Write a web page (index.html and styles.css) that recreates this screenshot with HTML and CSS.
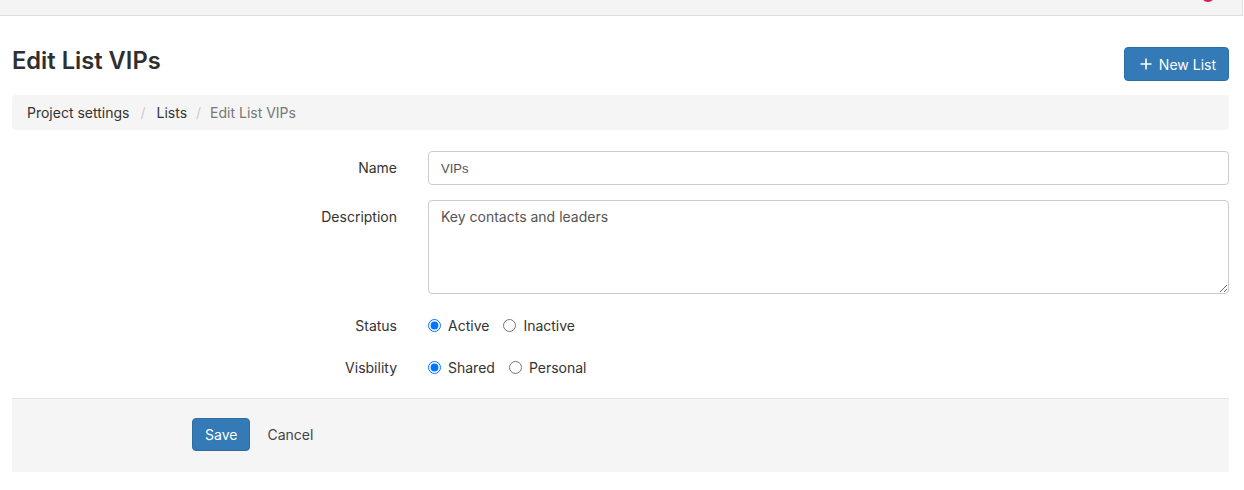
FILE: index.html
```html
<!DOCTYPE html>
<html>
<head>
<meta charset="utf-8">
<link rel="stylesheet" href="styles.css">
</head>
<body>
<div class="topbar"><span class="badge"></span></div>
<div class="page">
  <div class="page-head">
    <h1 class="title">Edit List VIPs</h1>
    <button class="btn btn-primary btn-new"><svg class="plus" width="12" height="12" viewBox="0 0 12 12"><path d="M6 0.5V11.5M0.5 6H11.5" stroke="#fff" stroke-width="1.6" fill="none"/></svg><span>New List</span></button>
  </div>
  <nav class="crumbs">
    <a class="crumb">Project settings</a><span class="sep">/</span>
    <a class="crumb">Lists</a><span class="sep sep-last">/</span>
    <span class="crumb active">Edit List VIPs</span>
  </nav>
  <form class="form">
    <div class="row">
      <label class="lbl">Name</label>
      <input class="input" type="text" value="VIPs">
    </div>
    <div class="row">
      <label class="lbl">Description</label>
      <textarea class="textarea">Key contacts and leaders</textarea>
    </div>
    <div class="row radio-row first">
      <span class="lbl">Status</span>
      <div class="radios">
        <label class="opt"><input type="radio" name="status" checked><span>Active</span></label>
        <label class="opt"><input type="radio" name="status"><span>Inactive</span></label>
      </div>
    </div>
    <div class="row radio-row">
      <span class="lbl">Visbility</span>
      <div class="radios">
        <label class="opt"><input type="radio" name="vis" checked><span>Shared</span></label>
        <label class="opt"><input type="radio" name="vis"><span>Personal</span></label>
      </div>
    </div>
    <div class="footer">
      <button type="button" class="btn btn-primary btn-save">Save</button>
      <a class="cancel">Cancel</a>
    </div>
  </form>
</div>
</body>
</html>
```
FILE: styles.css
```css
* { box-sizing: border-box; }
html, body { margin: 0; padding: 0; background: #fff; }
body {
  font-family: Inter, "Noto Sans", sans-serif;
  font-size: 14px;
  color: #333;
}
.topbar {
  position: relative;
  height: 16px;
  background: #f4f4f4;
  border-bottom: 1px solid #dedede;
  border-right: 1px solid #e2e2e2;
  margin-right: 1px;
  overflow: hidden;
}
.badge {
  position: absolute;
  left: 1201px;
  top: -12px;
  width: 14px;
  height: 14px;
  border-radius: 50%;
  background: #d81b4f;
}
.page { padding: 0 15px 0 12px; }
.page-head {
  display: flex;
  justify-content: space-between;
  align-items: flex-start;
  margin-top: 30px;
}
.title {
  margin: 2px 0 0;
  font-size: 23.7px;
  line-height: 26px;
  font-weight: 600;
  color: #2f2f2f;
}
.btn {
  font-family: Inter, sans-serif;
  font-size: 14px;
  border-radius: 4px;
  border: 1px solid #2e6da4;
  cursor: pointer;
}
.btn-primary { background: #337ab7; color: #fff; }
.btn-new {
  margin-top: 1px;
  height: 34px;
  display: flex;
  align-items: center;
  gap: 7px;
  padding: 0 12px 0 15px;
}
.plus { display: block; }
.crumbs {
  margin-top: 14px;
  height: 35px;
  background: #f5f5f5;
  border-radius: 4px;
  padding: 0 15px;
  display: flex;
  align-items: center;
}
.crumb { color: #333; }
.crumb.active { color: #777; }
.sep { color: #ccc; margin: 0 11px; }
.sep-last { margin: 0 9px; }
.form { margin-top: 21px; }
.row {
  display: grid;
  grid-template-columns: 385px 1fr;
  column-gap: 31px;
  margin-bottom: 15px;
  align-items: start;
}
.lbl {
  text-align: right;
  line-height: 20px;
  padding-top: 7px;
  color: #333;
}
.input {
  height: 34px;
  border: 1px solid #ccc;
  border-radius: 4px;
  padding: 6px 12px;
  font-family: "Liberation Sans", Arial, sans-serif;
  font-size: 13px;
  color: #555;
  outline: none;
}
.textarea {
  height: 94px;
  border: 1px solid #ccc;
  border-radius: 4px;
  padding: 6px 12px;
  font-family: Inter, sans-serif;
  font-size: 14px;
  line-height: 20px;
  color: #555;
  resize: vertical;
  outline: none;
  display: block;
}
.radio-row { height: 34px; margin-bottom: 8px; }
.radio-row .lbl { padding-top: 7px; }
.radios {
  display: flex;
  align-items: center;
  gap: 14px;
  height: 33px;
}
.opt {
  display: flex;
  align-items: center;
  gap: 7px;
  color: #333;
}
.opt input { margin: 0; width: 13px; height: 13px; }
.footer {
  margin-top: 13px;
  background: #f5f5f5;
  border-top: 1px solid #e5e5e5;
  padding: 19px 0 21px 180px;
  display: flex;
  align-items: center;
}
.btn-save {
  height: 33px;
  padding: 0 12px;
}
.cancel {
  margin-left: 17px;
  color: #444;
}
```
